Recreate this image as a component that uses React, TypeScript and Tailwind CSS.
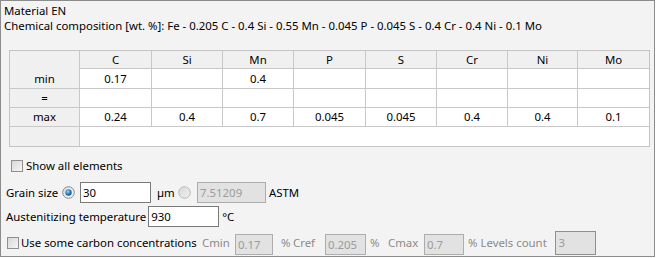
import React from 'react';

// --- Small form controls, Windows classic look ---
const CheckBox: React.FC = () => (
  <span className="w-[12px] h-[12px] shrink-0 border border-[#8f8f8f] bg-gradient-to-br from-[#d8d8d8] to-[#f6f6f6] box-border" />
);

const Radio: React.FC<{ checked?: boolean }> = ({ checked = false }) => (
  <svg width="13" height="13" viewBox="0 0 13 13" className="shrink-0">
    <defs>
      <linearGradient id={checked ? 'rOn' : 'rOff'} x1="0" y1="0" x2="1" y2="1">
        <stop offset="0" stopColor={checked ? '#dcdcdc' : '#d6d6d6'} />
        <stop offset="1" stopColor={checked ? '#fafafa' : '#f2f2f2'} />
      </linearGradient>
      <radialGradient id="dot" cx="0.4" cy="0.35" r="0.7">
        <stop offset="0" stopColor="#8fd2f7" />
        <stop offset="0.55" stopColor="#2a82c8" />
        <stop offset="1" stopColor="#14477f" />
      </radialGradient>
    </defs>
    <circle cx="6.5" cy="6.5" r="5.8" fill={`url(#${checked ? 'rOn' : 'rOff'})`} stroke={checked ? '#8a8a8a' : '#b9b9b9'} strokeWidth="1" />
    {checked && <circle cx="6.5" cy="6.5" r="3.2" fill="url(#dot)" />}
  </svg>
);

const Field: React.FC<{ value: string; w: string; disabled?: boolean; className?: string }> = ({ value, w, disabled = false, className = '' }) => (
  <div
    className={`${w} h-[21px] shrink-0 box-border border flex items-center pl-[2px] leading-none ${
      disabled ? 'bg-[#e2e2e2] border-[#adadad] text-[#9b9b9b]' : 'bg-white border-[#7a7a7a] text-black'
    } ${className}`}
  >
    {value}
  </div>
);

// --- Composition table ---
const elements = ['C', 'Si', 'Mn', 'P', 'S', 'Cr', 'Ni', 'Mo'];
const colW = ['w-[72px]', 'w-[71px]', 'w-[71px]', 'w-[72px]', 'w-[71px]', 'w-[71px]', 'w-[70px]', 'w-[72px]'];
const rows: { label: string; h: string; values: string[] }[] = [
  { label: 'min', h: 'h-[20px]', values: ['0.17', '', '0.4', '', '', '', '', ''] },
  { label: '=', h: 'h-[19px]', values: ['', '', '', '', '', '', '', ''] },
  { label: 'max', h: 'h-[19px]', values: ['0.24', '0.4', '0.7', '0.045', '0.045', '0.4', '0.4', '0.1'] },
];

const CompositionTable: React.FC = () => (
  <div className="ml-[8px] mt-[17px] w-[641px] border border-[#c4c4c4] box-border bg-[#f0f0f0]">
    <div className="flex h-[18px]">
      <div className="w-[69px] shrink-0" />
      {elements.map((el, i) => (
        <div key={el} className={`${colW[i]} shrink-0 border-l border-b border-[#c8c8c8] flex items-center justify-center`}>
          {el}
        </div>
      ))}
    </div>
    {rows.map(r => (
      <div key={r.label} className={`flex ${r.h} border-b border-[#c8c8c8]`}>
        <div className="w-[69px] shrink-0 flex items-center justify-center">{r.label}</div>
        {r.values.map((v, i) => (
          <div key={i} className={`${colW[i]} shrink-0 border-l border-[#c8c8c8] bg-white flex items-center justify-center`}>
            {v}
          </div>
        ))}
      </div>
    ))}
    <div className="flex h-[19px]">
      <div className="w-[69px] shrink-0" />
      <div className="flex-1 border-l border-[#c8c8c8] bg-white" />
    </div>
  </div>
);

export default function App() {
  return (
    <div
      className="w-[655px] h-[257px] border border-[#8c8c8c] bg-[#f3f3f3] box-border text-[11.4px] text-black overflow-hidden"
      style={{ fontFamily: '"Segoe UI", "Noto Sans", sans-serif' }}
    >
      <div className="pl-[3px] pt-[2px] leading-[15px]">
        <div>Material EN</div>
        <div className="whitespace-nowrap">
          Chemical composition [wt. %]: Fe - 0.205 C - 0.4 Si - 0.55 Mn - 0.045 P - 0.045 S - 0.4 Cr - 0.4 Ni - 0.1 Mo
        </div>
      </div>

      <CompositionTable />

      {/* Show all elements */}
      <div className="mt-[9px] h-[20px] pl-[10px] flex items-center">
        <CheckBox />
        <span className="ml-[3px] whitespace-nowrap">Show all elements</span>
      </div>

      {/* Grain size */}
      <div className="mt-[6px] h-[21px] pl-[5px] flex items-center whitespace-nowrap">
        <span className="min-w-[56px] pr-[2px] shrink-0">Grain size</span>
        <Radio checked />
        <Field value="30" w="w-[71px]" className="ml-[5px]" />
        <span className="ml-[6px] min-w-[21px] pr-[2px] shrink-0">µm</span>
        <Radio />
        <Field value="7.51209" w="w-[69px]" disabled className="ml-[6px]" />
        <span className="ml-[3px]">ASTM</span>
      </div>

      {/* Austenitizing temperature */}
      <div className="mt-[3px] h-[21px] pl-[5px] flex items-center whitespace-nowrap">
        <span className="min-w-[141px] pr-[2px] shrink-0">Austenitizing temperature</span>
        <Field value="930" w="w-[71px]" />
        <span className="ml-[3px]">°C</span>
      </div>

      {/* Carbon concentrations */}
      <div className="mt-[4px] h-[24px] pl-[6px] flex items-center whitespace-nowrap">
        <CheckBox />
        <span className="ml-[2px] min-w-[181px] shrink-0">Use some carbon concentrations</span>
        <span className="min-w-[33px] shrink-0 text-[#8a8a8a]">Cmin</span>
        <Field value="0.17" w="w-[38px]" disabled className="self-end" />
        <span className="ml-[8px] min-w-[12px] shrink-0 text-[#8a8a8a]">%</span>
        <span className="min-w-[32px] shrink-0 text-[#8a8a8a]">Cref</span>
        <Field value="0.205" w="w-[41px]" disabled className="self-end" />
        <span className="ml-[4px] min-w-[18px] shrink-0 text-[#8a8a8a]">%</span>
        <span className="min-w-[36px] shrink-0 text-[#8a8a8a]">Cmax</span>
        <Field value="0.7" w="w-[40px]" disabled className="self-end" />
        <span className="ml-[4px] min-w-[8px] shrink-0 text-[#8a8a8a]">%</span>
        <span className="pl-[3px] min-w-[78px] shrink-0 text-[#8a8a8a]">Levels count</span>
        <div className="w-[41px] h-[24px] shrink-0 box-border border border-[#8f8f8f] bg-[#e2e2e2] text-[#9b9b9b] flex items-center pl-[2px]">
          3
        </div>
      </div>
    </div>
  );
}
